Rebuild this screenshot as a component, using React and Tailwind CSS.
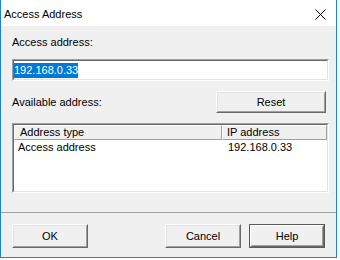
export default function App() {
  return (
    <div className="w-[340px] h-[260px] bg-white font-['Liberation_Sans',Arial,sans-serif] text-[11px] leading-[13px] text-black">
      <div className="w-[337px] h-[258px] border-x border-b border-[#1883d7] flex flex-col">
        {/* Title bar */}
        <div className="h-[26px] shrink-0 bg-white flex justify-between pl-[3px] pr-[10px]">
          <div className="pt-[8px]">Access Address</div>
          <div className="pt-[9px]">
            <svg width="11" height="11" viewBox="0 0 11 11" className="block">
              <path d="M0.5 0.5 L10.5 10.5 M10.5 0.5 L0.5 10.5" stroke="#000" strokeWidth="1" fill="none" />
            </svg>
          </div>
        </div>
        {/* Body */}
        <div className="flex-1 bg-[#f0f0f0] flex flex-col">
          <div className="pl-[11px] mt-[10px]">Access address:</div>
          {/* Input */}
          <div className="ml-[11px] mt-[10px] w-[317px] h-[22px] border border-t-[#a0a0a0] border-l-[#a0a0a0] border-r-white border-b-white">
            <div className="h-full border border-t-[#696969] border-l-[#696969] border-r-[#e3e3e3] border-b-[#e3e3e3] bg-white flex items-center">
              <span className="bg-[#0078d7] text-white h-[15px] leading-[15px]">192.168.0.33</span>
            </div>
          </div>
          {/* Available row */}
          <div className="mt-[10px] h-[22px] flex items-center justify-between pl-[11px] pr-[10px]">
            <div>Available address:</div>
            <Btn className="w-[110px] h-[22px]">Reset</Btn>
          </div>
          {/* List */}
          <div className="ml-[11px] mt-[10px] w-[317px] h-[70px] border border-t-[#a0a0a0] border-l-[#a0a0a0] border-r-white border-b-white">
            <div className="h-full border border-t-[#696969] border-l-[#696969] border-r-[#e3e3e3] border-b-[#e3e3e3] bg-white flex flex-col">
              <div className="flex h-[15px]">
                <div className="w-[208px] border-t border-l border-white border-r border-b border-r-[#a0a0a0] border-b-[#a0a0a0] bg-[#f0f0f0] pl-[5px] leading-[12px]">Address type</div>
                <div className="flex-1 border-t border-l border-white border-r border-b border-r-[#a0a0a0] border-b-[#a0a0a0] bg-[#f0f0f0] pl-[4px] leading-[12px]">IP address</div>
              </div>
              <div className="flex mt-[1px]">
                <div className="w-[208px] pl-[4px]">Access address</div>
                <div className="pl-[6px]">192.168.0.33</div>
              </div>
            </div>
          </div>
          {/* Separator */}
          <div className="mt-[19px] h-px bg-[#a0a0a0]" />
          {/* Bottom buttons */}
          <div className="mt-[11px] flex justify-between pl-[11px] pr-[11px]">
            <Btn className="w-[76px] h-[24px]">OK</Btn>
            <div className="flex gap-[8px]">
              <Btn className="w-[76px] h-[24px]">Cancel</Btn>
              <div className="w-[76px] h-[24px] border border-[#5a5a5a]">
                <div className="h-full border border-t-white border-l-white border-r-[#696969] border-b-[#696969]">
                  <div className="h-full border border-t-[#f0f0f0] border-l-[#f0f0f0] border-r-[#a0a0a0] border-b-[#a0a0a0] flex items-center justify-center">
                    Help
                  </div>
                </div>
              </div>
            </div>
          </div>
        </div>
      </div>
    </div>
  );
}

function Btn({ className, children }) {
  return (
    <div className={className}>
      <div className="h-full border border-t-white border-l-white border-r-[#696969] border-b-[#696969]">
        <div className="h-full border border-t-[#e3e3e3] border-l-[#e3e3e3] border-r-[#a0a0a0] border-b-[#a0a0a0] bg-[#f0f0f0] flex items-center justify-center">
          {children}
        </div>
      </div>
    </div>
  );
}
